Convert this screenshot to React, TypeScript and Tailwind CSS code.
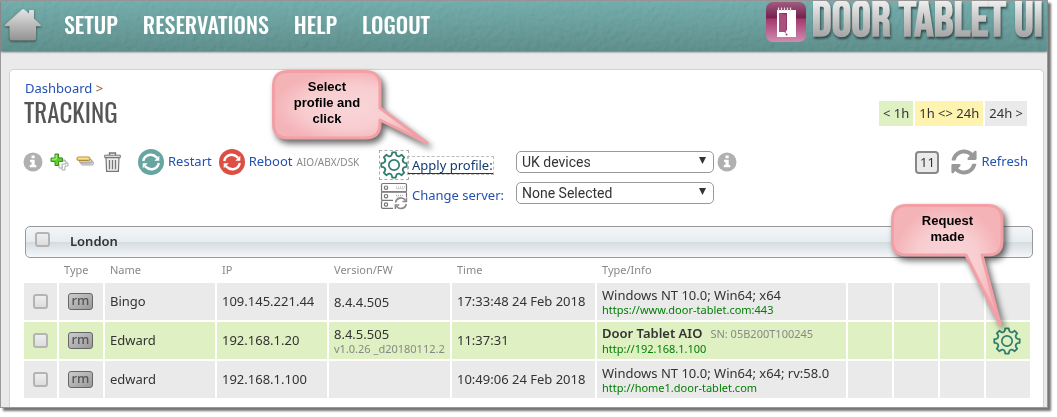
import React, { useState } from "react";
import { FaSyncAlt } from "react-icons/fa";

interface Device {
  name: string;
  ip: string;
  version: string;
  firmware?: string;
  time: string;
  info: string;
  serial?: string;
  url: string;
  recent?: boolean;
  pending?: boolean;
}

const devices: Device[] = [
  {
    name: "Bingo",
    ip: "109.145.221.44",
    version: "8.4.4.505",
    time: "17:33:48 24 Feb 2018",
    info: "Windows NT 10.0; Win64; x64",
    url: "https://www.door-tablet.com:443",
  },
  {
    name: "Edward",
    ip: "192.168.1.20",
    version: "8.4.5.505",
    firmware: "v1.0.26 _d20180112.2",
    time: "11:37:31",
    info: "Door Tablet AIO",
    serial: "SN: 05B200T100245",
    url: "http://192.168.1.100",
    recent: true,
    pending: true,
  },
  {
    name: "edward",
    ip: "192.168.1.100",
    version: "",
    time: "10:49:06 24 Feb 2018",
    info: "Windows NT 10.0; Win64; x64; rv:58.0",
    url: "http://home1.door-tablet.com",
  },
];

const navItems = ["SETUP", "RESERVATIONS", "HELP", "LOGOUT"];

// Eight flat teeth joined by curved valleys
const gearPath = (() => {
  const point = (radius: number, degrees: number) => {
    const a = (degrees * Math.PI) / 180;
    return `${(14 + radius * Math.sin(a)).toFixed(2)} ${(14 - radius * Math.cos(a)).toFixed(2)}`;
  };
  let d = `M${point(12.8, -8)}`;
  for (let i = 0; i < 8; i++) {
    const a = i * 45;
    d += `L${point(12.8, a + 8)}L${point(10.6, a + 12)}Q${point(8.8, a + 22.5)} ${point(10.6, a + 33)}L${point(12.8, a + 37)}`;
  }
  return d + "Z";
})();

const GearIcon: React.FC = () => (
  <svg className="size-7 shrink-0" viewBox="0 0 28 28" fill="none" stroke="#307d6d" strokeLinejoin="round" aria-hidden="true">
    <path d={gearPath} strokeWidth="1.8" />
    <circle cx="14" cy="14" r="5.2" strokeWidth="1.7" />
  </svg>
);

const InfoIcon: React.FC = () => (
  <svg className="size-5 shrink-0" viewBox="0 0 20 20" aria-hidden="true">
    <circle cx="10" cy="10" r="9.5" fill="#b0b0b0" />
    <path d="M8.5 3.5h3.2v2.8H8.5zM7 7.8h4.7v5.2h1.6v2.2H6.8V13h1.7v-3H7z" fill="#fff" />
  </svg>
);

const CycleIcon: React.FC<{ color: string }> = ({ color }) => (
  <svg className="size-[26px] shrink-0" viewBox="0 0 26 26" aria-hidden="true">
    <circle cx="13" cy="13" r="13" fill={color} />
    <g fill="none" stroke="#fff" strokeWidth="2.4">
      <path d="M5.2 12C6.5 5.5 14 3.5 19.2 8.8" />
      <path d="M20.8 14C19.5 20.5 12 22.5 6.8 17.2" />
    </g>
    <path d="M21.3 6.8v5h-5zM4.7 19.2v-5h5z" fill="#fff" />
  </svg>
);

const AddIcon: React.FC = () => (
  <svg className="size-5 shrink-0" viewBox="0 0 20 20" aria-hidden="true">
    <g fill="#fff" stroke="#aaa" strokeLinejoin="round">
      <path d="M13 8h3v3h3v3h-3v4h-3v-4h-3v-3h3z" />
      <path d="M10 6h3v3h4v3h-4v4h-3v-4H7V9h3z" />
    </g>
    <path d="M6 2h3.5v4h4v3.5h-4v4H6v-4H2V6h4z" fill="#5fd02c" stroke="#388c20" strokeLinejoin="round" />
    <path d="M7.2 3v4.2H3" fill="none" stroke="#b7f392" />
  </svg>
);

const RemoveIcon: React.FC = () => (
  <svg className="size-5 shrink-0" viewBox="0 0 20 20" aria-hidden="true">
    <rect x="6" y="9.5" width="12.5" height="3.5" rx="1.5" fill="#ddd" stroke="#aaa" />
    <rect x="4.5" y="7.5" width="12.5" height="3.5" rx="1.5" fill="#ccc" stroke="#999" />
    <rect x="2" y="5" width="13" height="3.5" rx="1.5" fill="#f5ca54" stroke="#b28b39" />
    <path d="M3.5 6.2h10" stroke="#ffeaa2" />
  </svg>
);

const TrashIcon: React.FC = () => (
  <svg className="h-5 w-[17px] shrink-0" viewBox="0 0 17 20" fill="none" stroke="#777" aria-hidden="true">
    <path d="M5.5 3V1h6v2" strokeWidth="1.4" />
    <path d="M.7 3.2h15.6v2.5H.7z" fill="#ddd" />
    <path d="M2 5.7l.6 13.6h11.8L15 5.7z" fill="#eee" strokeWidth="1.2" />
    <path d="M5.5 8v9.2M8.5 8v9.2M11.5 8v9.2" strokeWidth="1.3" />
  </svg>
);

const ServerIcon: React.FC = () => (
  <svg className="size-7 shrink-0" viewBox="0 0 28 28" fill="none" stroke="#777" strokeWidth="1.2" aria-hidden="true">
    <path d="M13 26.4H3a1.5 1.5 0 0 1-1.5-1.5v-5A1.5 1.5 0 0 1 3 18.4h10" />
    <rect x="1.5" y="1.5" width="25" height="8.4" rx="1.5" />
    <path d="M26.5 15v-3.6a1.5 1.5 0 0 0-1.5-1.5H3a1.5 1.5 0 0 0-1.5 1.5V17A1.5 1.5 0 0 0 3 18.4" />
    <circle cx="6" cy="5.7" r="1.7" />
    <circle cx="6" cy="14.2" r="1.7" />
    <circle cx="6" cy="22.5" r="1.7" />
    <path d="M16 5h9M16.5 6.6h8M16 13.3h8M16.5 15h5" stroke="#aaa" strokeDasharray="1 1" />
    <path d="M15.6 20.5c.8-5 7.5-6 9.9-1.8M26.2 22c-.8 5-7.5 6-9.9 1.8" stroke="#888" strokeWidth="1.6" />
    <path d="M26.5 15.5v4h-4M15.3 27v-4h4" stroke="#888" strokeWidth="1.4" />
  </svg>
);

const HomeIcon: React.FC = () => (
  <svg className="h-9 w-[38px] drop-shadow-[0_1px_1px_#0008]" viewBox="0 0 38 36" aria-hidden="true">
    <defs>
      <linearGradient id="home" x1="0" y1="0" x2="0" y2="1">
        <stop stopColor="#e4e4e4" />
        <stop offset="1" stopColor="#929292" />
      </linearGradient>
    </defs>
    <path
      d="M18 1.5q1.2-1 2.4 0l4.6 4V3q0-1 1-1h3q1 0 1 1v7.5l6.5 6q1.2 1.5-.8 1.7H32V30q0 2.5-2.5 2.5h-21Q5.500 32.500 5.500 30V18.200H2q-2-.2-.8-1.700z"
      fill="url(#home)"
    />
  </svg>
);

const LogoIcon: React.FC = () => (
  <svg className="size-10 shrink-0" viewBox="0 0 40 40" aria-hidden="true">
    <defs>
      <linearGradient id="logo" x1="0" y1="0" x2="0" y2="1">
        <stop stopColor="#a05c7f" />
        <stop offset=".4" stopColor="#74204c" />
        <stop offset=".42" stopColor="#a3386e" />
        <stop offset="1" stopColor="#cf8db0" />
      </linearGradient>
    </defs>
    <rect width="40" height="40" rx="7" fill="url(#logo)" />
    <path d="M11 8h19v27H11z" fill="#fff" />
    <path d="M13 11h8v17l-2 2h-6z" fill="#943865" />
    <path d="M13 11l7 2.5V31l-2-1h-5z" fill="#a9507c" />
    <path d="M12.5 9V5.5M15.5 9V5.5M18.5 9V5.5M21.5 9V5.5M24.5 9V5.5" stroke="#ead9e2" strokeWidth="1.3" />
    <circle cx="20.5" cy="32.5" r="1" fill="#943865" />
  </svg>
);

const HeaderTexture: React.FC = () => (
  <svg className="absolute inset-0 size-full opacity-40 mix-blend-soft-light" aria-hidden="true">
    <filter id="leather">
      <feTurbulence type="fractalNoise" baseFrequency=".18" numOctaves="2" seed="4" />
      <feDiffuseLighting surfaceScale="1.2" diffuseConstant=".7" lightingColor="#fff">
        <feDistantLight azimuth="225" elevation="50" />
      </feDiffuseLighting>
    </filter>
    <rect width="100%" height="100%" filter="url(#leather)" />
  </svg>
);

interface CalloutProps {
  id: string;
  shape: string;
  viewBox: string;
  className: string;
  textClassName: string;
  children: React.ReactNode;
}

const Callout: React.FC<CalloutProps> = ({ id, shape, viewBox, className, textClassName, children }) => (
  <div className={`pointer-events-none absolute z-10 ${className}`} role="note">
    <svg className="absolute inset-0 size-full overflow-visible drop-shadow-[3px_4px_3px_#0009]" viewBox={viewBox} aria-hidden="true">
      <defs>
        <radialGradient id={id}>
          <stop stopColor="#f9d5d8" />
          <stop offset=".6" stopColor="#f8cdd0" />
          <stop offset="1" stopColor="#f4b3b7" />
        </radialGradient>
      </defs>
      <path d={shape} fill={`url(#${id})`} stroke="#f2a0a6" strokeWidth="3" strokeLinejoin="round" />
    </svg>
    <p className={`relative text-center font-['Liberation_Sans',Arial,sans-serif] text-[13px] leading-4 font-bold text-black ${textClassName}`}>
      {children}
    </p>
  </div>
);

const Checkbox: React.FC<{ label: string }> = ({ label }) => (
  <input
    type="checkbox"
    aria-label={label}
    className="block size-[15px] appearance-none rounded-[3px] border-2 border-[#b4b4b4] bg-linear-to-b from-[#eee] to-[#ddd] checked:bg-[#5a9a9a]"
  />
);

const ProfileSelect: React.FC<{ id: string; options: string[] }> = ({ id, options }) => {
  const [value, setValue] = useState(options[0]);
  return (
    <span className="relative">
      <select
        id={id}
        className="h-[22px] w-[198px] appearance-none rounded-[5px] border border-[#999] bg-white pl-[5px] font-[Roboto,sans-serif] text-sm leading-5 text-[#333]"
        value={value}
        onChange={(e) => setValue(e.target.value)}
      >
        {options.map((option) => (
          <option key={option}>{option}</option>
        ))}
      </select>
      <svg className="pointer-events-none absolute top-[6px] right-2 size-[7px]" viewBox="0 0 7 7" aria-hidden="true">
        <path d="M0 0h7L3.5 7z" fill="#333" />
      </svg>
    </span>
  );
};

const DeviceRow: React.FC<{ device: Device }> = ({ device }) => (
  <tr className={device.recent ? "h-[37px] bg-[#dff0c2]" : "h-[37px] bg-[#eaeaea]"}>
    <td className="pl-[9px]">
      <Checkbox label={`Select ${device.name}`} />
    </td>
    <td className="pl-[9px]">
      <span className="block h-[17px] w-[25px] rounded-[3px] border border-[#666] bg-linear-to-br from-[#ccc] to-[#999] text-center text-[13px] leading-[13px] font-medium text-[#555]">
        rm
      </span>
    </td>
    <td className="pl-[5px]">{device.name}</td>
    <td className="pl-[5px]">{device.ip}</td>
    <td className="pl-[5px] leading-4">
      {device.version}
      {device.firmware && <div className="text-[11px] leading-[14px] text-[#888]">{device.firmware}</div>}
    </td>
    <td className="pl-[5px]">{device.time}</td>
    <td className="pl-[5px] leading-4">
      {device.serial ? (
        <>
          <b className="font-semibold">{device.info}</b>
          <span className="pl-2 text-[11px] text-[#888]">{device.serial}</span>
        </>
      ) : (
        device.info
      )}
      <a href={device.url} className="block text-[11px] leading-[14px] text-[#008000]">
        {device.url}
      </a>
    </td>
    <td></td>
    <td></td>
    <td></td>
    <td className="pl-[7px]">{device.pending && <GearIcon />}</td>
  </tr>
);

const App: React.FC = () => {
  return (
    <div className="bg-white pr-[9px] pb-[8px] font-['Noto_Sans','Open_Sans',sans-serif] text-[13px] text-[#333]">
      <div className="relative border border-[#999] bg-[#eaeaea] shadow-[3px_3px_2px_#777]">
        <header className="relative flex h-[50px] items-center bg-linear-to-b from-[#68a5a4] to-[#528481] shadow-[0_1px_2px_#666]">
          <HeaderTexture />
          <a href="#home" aria-label="Home" className="relative ml-[3px]">
            <HomeIcon />
          </a>
          <nav className="relative ml-[22px] flex gap-[25px] pb-1 font-[Oswald,'Roboto_Condensed','Liberation_Sans_Narrow',sans-serif] text-[22px] leading-6 font-medium text-white">
            {navItems.map((item) => (
              <a key={item} href={`#${item.toLowerCase()}`}>
                {item}
              </a>
            ))}
          </nav>
          <div className="relative ml-auto flex items-center gap-[6px] pr-1 pb-[9px] whitespace-nowrap">
            <LogoIcon />
            <span className="bg-linear-to-b from-[#eee] to-[#999] bg-clip-text font-['Bebas_Neue','Roboto_Condensed','Liberation_Sans_Narrow',sans-serif] text-[49px] leading-[42px] font-bold text-transparent drop-shadow-[1px_2px_1px_#0008]">
              DOOR TABLET UI
            </span>
          </div>
        </header>

        <main className="relative mt-[18px] mr-[3px] ml-[8px] rounded-t-[5px] border border-b-0 border-[#d2d2d2] bg-white pt-[10px] pr-3 pb-[7px] pl-[13px]">
          <div className="flex justify-between">
            <div className="ml-[2px]">
              <div className="leading-4">
                <a href="#dashboard" className="text-[#2450b2]">
                  Dashboard
                </a>{" "}
                <span className="text-[#a04a20]">&gt;</span>
              </div>
              <h1 className="-ml-px font-[Oswald,'Roboto_Condensed','Liberation_Sans_Narrow',sans-serif] text-[25px] leading-8 text-[#555]">TRACKING</h1>
            </div>
            <ul className="mt-[21px] mr-1 flex h-[25px] gap-[2px] leading-[25px]">
              <li className="bg-[#dff0c2] px-1">&lt; 1h</li>
              <li className="bg-[#fff3b0] px-1">1h &lt;&gt; 24h</li>
              <li className="bg-[#eaeaea] px-1">24h &gt;</li>
            </ul>
          </div>

          <div className="mt-[21px] flex h-[68px] items-start">
            <div className="flex w-[357px] shrink-0 items-center text-[#2450b2]">
              <button type="button" aria-label="Information" className="mr-[6px]"><InfoIcon /></button>
              <button type="button" aria-label="Add" className="mr-[6px]"><AddIcon /></button>
              <button type="button" aria-label="Remove" className="mr-[9px]"><RemoveIcon /></button>
              <button type="button" aria-label="Delete"><TrashIcon /></button>
              <button type="button" className="ml-[17px] flex items-center gap-1">
                <CycleIcon color="#66a5a2" />
                Restart
              </button>
              <button type="button" className="ml-[7px] flex items-center gap-1">
                <CycleIcon color="#dc4f42" />
                Reboot
              </button>
              <span className="ml-1 text-[10px] text-[#888]">AIO/ABX/DSK</span>
            </div>

            <div className="mt-[2px] grid shrink-0 grid-cols-[136px_auto] items-start gap-y-[3px]">
              <label htmlFor="profile" className="flex h-7 items-center text-[#123c70]">
                <span className="outline-1 outline-dashed outline-[#aaa]"><GearIcon /></span>
                <span className="border-b border-[#123c70] pl-1 leading-4 outline-1 outline-dashed outline-[#bbb]">Apply profile:</span>
              </label>
              <div className="flex items-center gap-[3px]">
                <ProfileSelect id="profile" options={["UK devices", "None Selected"]} />
                <InfoIcon />
              </div>
              <label htmlFor="server" className="flex h-7 items-center gap-1 text-[#2450b2]">
                <ServerIcon />
                Change server:
              </label>
              <div className="flex">
                <ProfileSelect id="server" options={["None Selected"]} />
              </div>
            </div>

            <div className="mr-[3px] ml-auto flex items-center">
              <button type="button" className="h-[23px] w-6 rounded-[4px] border-2 border-[#888] bg-[#eaeaea] leading-4">
                11
              </button>
              <button type="button" className="ml-[12px] flex items-center gap-1 text-[#2450b2]">
                <FaSyncAlt className="size-[26px] text-[#999]" />
                Refresh
              </button>
            </div>
          </div>

          <div className="mt-[9px] mr-[-2px] ml-[2px] flex h-8 items-center rounded-[5px] border border-[#999] bg-[linear-gradient(#f3f6f8,#e6ecef_49%,#d5dce1_51%,#f5f7f8)] pl-[9px]">
            <div className="pb-[5px]">
              <Checkbox label="Select London" />
            </div>
            <span className="ml-[20px] font-semibold">London</span>
          </div>

          <table className="-mx-[1px] w-[calc(100%+2px)] table-fixed border-separate border-spacing-x-[2px] border-spacing-y-0 text-left">
            <colgroup>
              <col className="w-[33px]" />
              <col className="w-[44px]" />
              <col className="w-[110px]" />
              <col className="w-[110px]" />
              <col className="w-[121px]" />
              <col className="w-[143px]" />
              <col />
              <col className="w-[44px]" />
              <col className="w-[44px]" />
              <col className="w-[44px]" />
              <col className="w-[44px]" />
            </colgroup>
            <thead>
              <tr className="h-[25px] text-[11px] text-[#888]">
                <td></td>
                <th className="pl-[5px] font-normal">Type</th>
                <th className="pl-[5px] font-normal">Name</th>
                <th className="pl-[5px] font-normal">IP</th>
                <th className="pl-[5px] font-normal">Version/FW</th>
                <th className="pl-[5px] font-normal">Time</th>
                <th className="pl-[5px] font-normal">Type/Info</th>
                <td colSpan={4}></td>
              </tr>
            </thead>
            {devices.map((device) => (
              <tbody key={device.name}>
                <DeviceRow device={device} />
                <tr className="h-[2px]" aria-hidden="true">
                  <td colSpan={11}></td>
                </tr>
              </tbody>
            ))}
          </table>

          <Callout
            id="callout-profile"
            className="top-0 left-[262px] h-[74px] w-[158px]"
            textClassName="w-[110px] pt-[9px]"
            viewBox="0 0 158 74"
            shape="M16 1.5H93Q108 1.5 108 16V38L155 73L108 50V54Q108 68 93 68H16Q1.5 68 1.5 54V16Q1.5 1.5 16 1.5Z"
          >
            Select
            <br />
            profile and
            <br />
            click
          </Callout>
          <Callout
            id="callout-request"
            className="top-[134px] right-[39px] h-[122px] w-[113px]"
            textClassName="pt-[9px]"
            viewBox="0 0 113 122"
            shape="M15 1.5H97Q111 1.5 111 16V37Q111 51 97 51H91L109 120L75 51H15Q1.5 51 1.5 37V16Q1.5 1.5 15 1.5Z"
          >
            Request
            <br />
            made
          </Callout>
        </main>
      </div>
    </div>
  );
};

export default App;
